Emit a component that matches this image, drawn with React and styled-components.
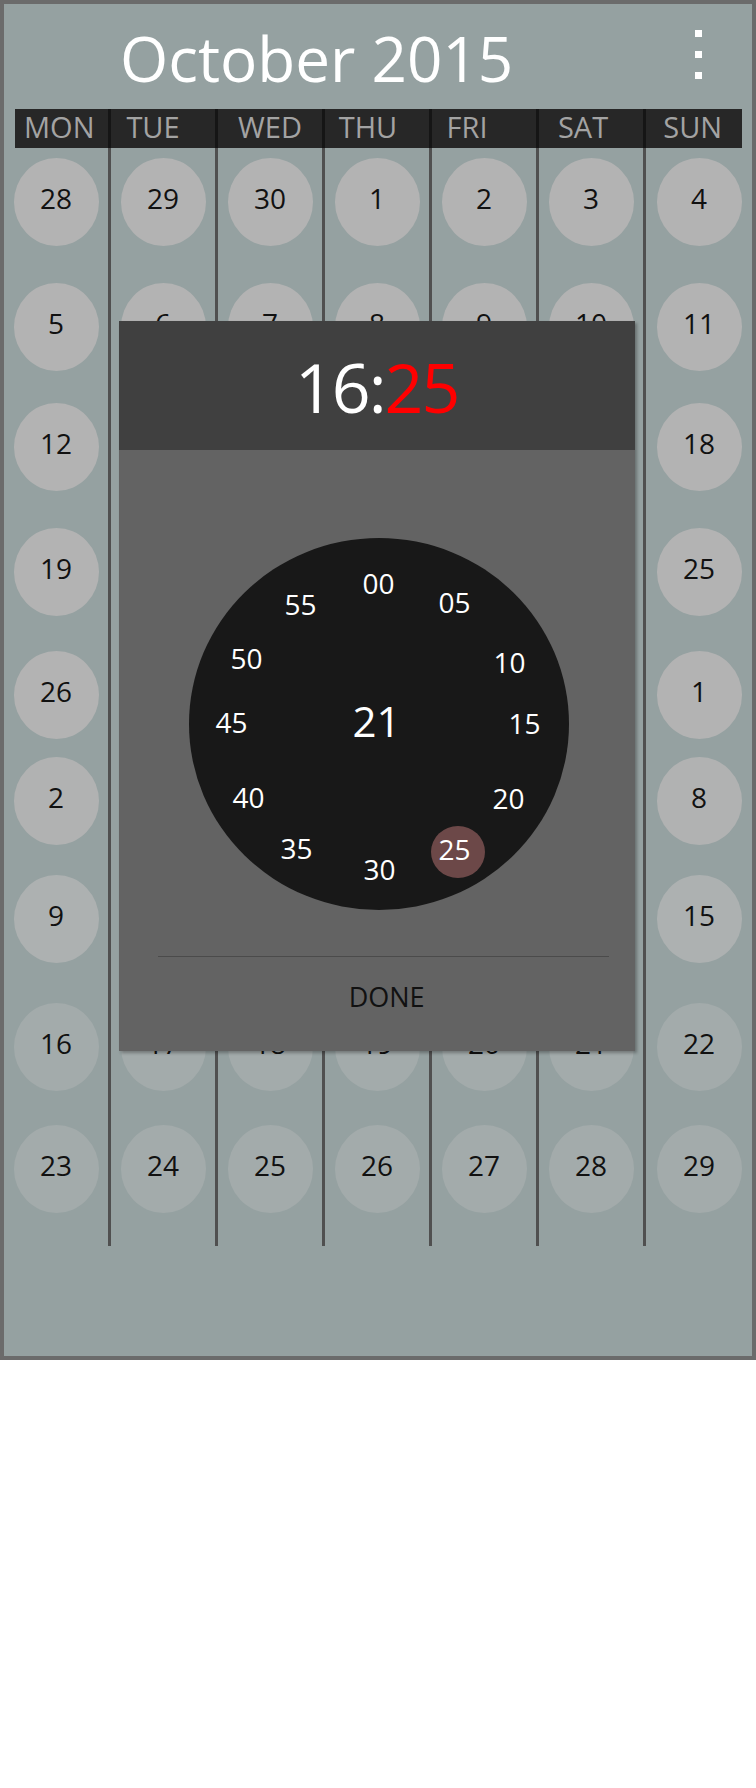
import React from 'react';
import styled, { createGlobalStyle } from 'styled-components';

//-----------------------------------------------{data}------------------------------------------------------//

const days = [
  { name: 'MON', dx: -2 },
  { name: 'TUE', dx: -10 },
  { name: 'WED', dx: 0 },
  { name: 'THU', dx: -9 },
  { name: 'FRI', dx: -17 },
  { name: 'SAT', dx: -8 },
  { name: 'SUN', dx: -1 },
];

// each week: gap above the row and the tint of its circles
const weeks = [
  { mt: 10, bg: '#b3b3b3', dates: [28, 29, 30, 1, 2, 3, 4] },
  { mt: 37, bg: '#b3b3b3', dates: [5, 6, 7, 8, 9, 10, 11] },
  { mt: 32, bg: '#b3b3b3', dates: [12, 13, 14, 15, 16, 17, 18] },
  { mt: 37, bg: '#b3b3b3', dates: [19, 20, 21, 22, 23, 24, 25] },
  { mt: 35, bg: '#b3b3b3', dates: [26, 27, 28, 29, 30, 31, 1] },
  { mt: 18, bg: '#b1b2b2', dates: [2, 3, 4, 5, 6, 7, 8] },
  { mt: 30, bg: '#adb1b1', dates: [9, 10, 11, 12, 13, 14, 15] },
  { mt: 40, bg: '#a3abab', dates: [16, 17, 18, 19, 20, 21, 22] },
  { mt: 34, bg: '#a3abab', dates: [23, 24, 25, 26, 27, 28, 29] },
];

// minute marks on the dial (centre points inside the dial box)
const marks = [
  { label: '00', x: 190, y: 45 },
  { label: '05', x: 266, y: 64 },
  { label: '10', x: 321, y: 124 },
  { label: '15', x: 336, y: 185 },
  { label: '20', x: 320, y: 260 },
  { label: '25', x: 266, y: 311 },
  { label: '30', x: 191, y: 331 },
  { label: '35', x: 108, y: 310 },
  { label: '40', x: 60, y: 259 },
  { label: '45', x: 43, y: 184 },
  { label: '50', x: 58, y: 120 },
  { label: '55', x: 112, y: 66 },
];

//-----------------------------------------------{styled components}------------------------------------------------------//

const GlobalStyle = createGlobalStyle`
  html, body {
    margin: 0;
    padding: 0;
    background: #fff;
  }
  body {
    font-family: 'Open Sans', 'Noto Sans', sans-serif;
  }
`;

const Frame = styled.div`
  position: relative;
  box-sizing: border-box;
  width: 756px;
  height: 1360px;
  border: 4px solid #6b6b6b;
  background: #95a1a1;
  display: flex;
  flex-direction: column;
`;

const TitleBar = styled.div`
  display: flex;
  align-items: flex-start;
  height: 105px;
`;

const Title = styled.h1`
  margin: 23px 0 0 116px;
  font-size: 62px;
  font-weight: 400;
  line-height: 1;
  color: #fff;
`;

const Kebab = styled.div`
  margin: 26px 50px 0 auto;
  display: flex;
  flex-direction: column;
  gap: 14px;

  span {
    width: 7px;
    height: 7px;
    background: #fff;
  }
`;

const Calendar = styled.div`
  display: grid;
  grid-template-columns: repeat(6, 107px) 106px;
  height: 1137px;
`;

const Column = styled.div`
  display: flex;
  flex-direction: column;
  align-items: center;
  box-sizing: border-box;
  border-right: ${p => (p.$last ? 'none' : '3px solid #505050')};
`;

// the label covers the column's divider with a darker one of its own
const DayLabel = styled.div`
  align-self: stretch;
  box-sizing: border-box;
  height: 39px;
  line-height: 35px;
  margin-left: ${p => (p.$first ? '10.5px' : '0')};
  margin-right: ${p => (p.$last ? '10.5px' : '-3px')};
  border-right: ${p => (p.$last ? 'none' : '3px solid #151515')};
  padding-left: ${p => (p.$dx > 0 ? p.$dx * 2 : 0)}px;
  padding-right: ${p => (p.$dx < 0 ? -p.$dx * 2 : 0)}px;
  background: #272727;
  color: #a3a3a3;
  font-size: 29px;
  text-align: center;
`;

const Day = styled.div`
  box-sizing: border-box;
  width: 85px;
  height: 88px;
  flex-shrink: 0;
  margin-top: ${p => p.$mt}px;
  padding-bottom: 8px;
  border-radius: 50%;
  background: ${p => p.$bg};
  display: flex;
  align-items: center;
  justify-content: center;
  color: #111;
  font-size: 28px;
`;

const Dialog = styled.div`
  position: absolute;
  left: 114.6px;
  top: 316.7px;
  width: 516px;
  height: 730px;
  background: #636363;
  box-shadow: 2px 2px 3px rgba(0, 0, 0, 0.3);
  display: flex;
  flex-direction: column;
`;

const TimeHeader = styled.div`
  box-sizing: border-box;
  height: 129px;
  padding-top: 32px;
  background: #404040;
  color: #fff;
  font-size: 68px;
  line-height: 1;
  letter-spacing: -2px;
  text-align: center;
`;

const Minutes = styled.span`
  color: #ff0000;
`;

const Dial = styled.div`
  position: relative;
  width: 380px;
  height: 372px;
  margin: 88px 0 0 70px;
  border-radius: 50%;
  background: #181818;
`;

const Mark = styled.div`
  position: absolute;
  left: ${p => p.$x}px;
  top: ${p => p.$y}px;
  transform: translate(-50%, -50%);
  color: #fff;
  font-size: 28px;
  line-height: 1;
`;

const Selected = styled.div`
  position: absolute;
  left: 242px;
  top: 288px;
  width: 54px;
  height: 52px;
  border-radius: 50%;
  background: #6c4848;
`;

const Hour = styled.div`
  position: absolute;
  left: 188px;
  top: 183px;
  transform: translate(-50%, -50%);
  color: #fff;
  font-size: 42px;
  line-height: 1;
`;

const Divider = styled.div`
  height: 1px;
  margin: 46px 26px 0 39px;
  background: #4b4b4b;
`;

const Done = styled.div`
  margin-top: 26px;
  padding-left: 20px;
  color: #111;
  font-size: 27px;
  line-height: 27px;
  text-align: center;
`;

//-----------------------------------------------{App}------------------------------------------------------//

export default function App() {
  return (
    <>
      <GlobalStyle />
      <Frame>
        <TitleBar>
          <Title>October 2015</Title>
          <Kebab>
            <span />
            <span />
            <span />
          </Kebab>
        </TitleBar>

        <Calendar>
          {days.map((d, col) => (
            <Column key={d.name} $last={col === 6}>
              <DayLabel $first={col === 0} $last={col === 6} $dx={d.dx}>
                {d.name}
              </DayLabel>
              {weeks.map((w, row) => (
                <Day key={row} $mt={w.mt} $bg={w.bg}>
                  {w.dates[col]}
                </Day>
              ))}
            </Column>
          ))}
        </Calendar>

        <Dialog>
          <TimeHeader>
            16:<Minutes>25</Minutes>
          </TimeHeader>
          <Dial>
            <Selected />
            {marks.map(m => (
              <Mark key={m.label} $x={m.x} $y={m.y}>
                {m.label}
              </Mark>
            ))}
            <Hour>21</Hour>
          </Dial>
          <Divider />
          <Done>DONE</Done>
        </Dialog>
      </Frame>
    </>
  );
}
